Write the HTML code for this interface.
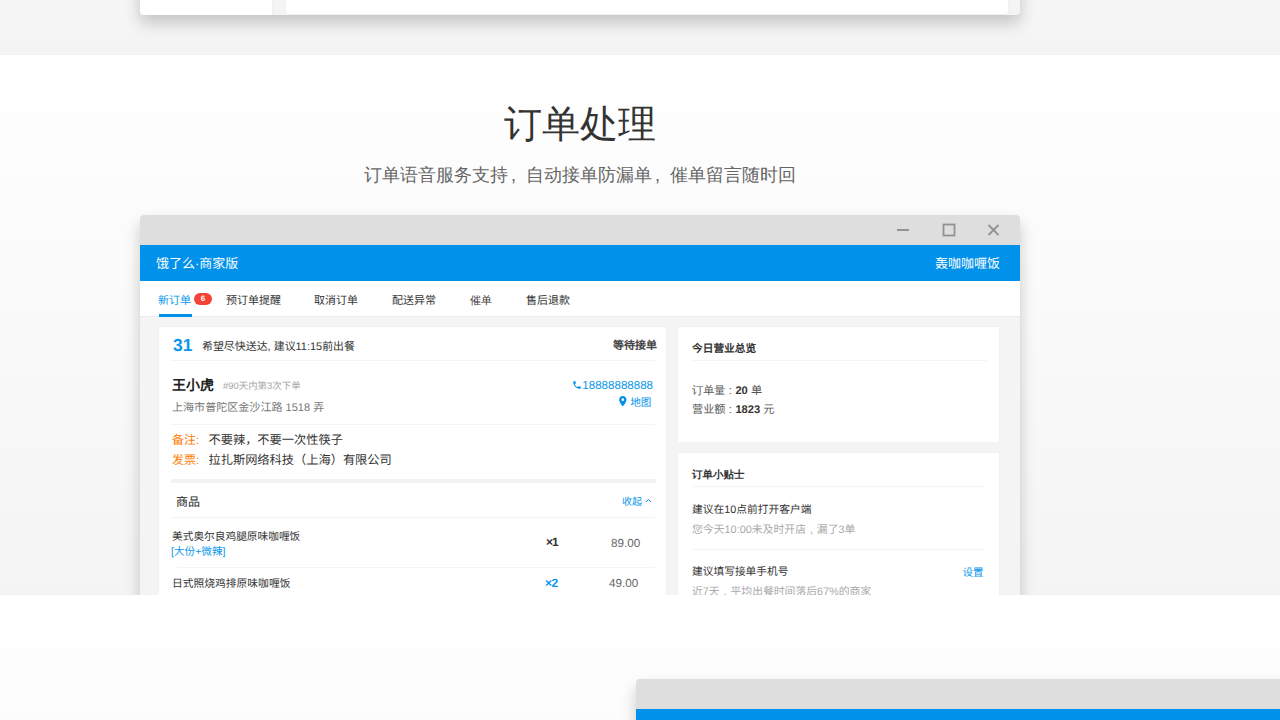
<!DOCTYPE html>
<html>
<head>
<meta charset="utf-8">
<title>订单处理</title>
<style>
*{box-sizing:border-box;margin:0;padding:0}
html,body{width:1280px;height:720px;overflow:hidden;background:#fdfdfd;font-family:"Liberation Sans",sans-serif;color:#333}
.sec{position:absolute;left:0;width:1280px;overflow:hidden;background:linear-gradient(#ffffff,#f4f4f4)}
#s1{top:-485px;height:540px}
#s2{top:55px;height:540px}
#s3{top:595px;height:540px}
.win{text-rendering:geometricPrecision;position:absolute;width:880px;height:600px;border-radius:4px 4px 0 0;box-shadow:0 8px 16px rgba(0,0,0,.2);background:#f4f4f4;overflow:hidden}
.tbar{position:absolute;left:0;top:0;width:880px;height:30px;background:#dedede}
.bbar{position:absolute;left:0;top:30px;width:880px;height:36px;background:#0091ea;color:#fff;font-size:13px;line-height:36px}
.tabs{position:absolute;left:0;top:66px;width:880px;height:36px;background:#fff;border-bottom:1px solid #ececec;font-size:11px;color:#333}
.tabs span{position:absolute;top:2px;line-height:37px;white-space:nowrap}
.card{position:absolute;background:#fff;border-radius:1px;box-shadow:0 0 2px rgba(0,0,0,.06)}
.t{position:absolute;white-space:nowrap;line-height:1}
.hl{position:absolute;height:1px;background:#f4f4f4}
h1{position:absolute;left:140px;width:880px;top:41px;text-align:center;font-size:38px;font-weight:400;color:#333;line-height:56px}
h2{position:absolute;left:140px;width:880px;top:107px;text-align:center;font-size:18px;font-weight:400;color:#666;line-height:26px}
.cl{display:inline-block;width:10px;text-align:center;font-style:normal}
b{font-weight:700;color:#333}
.cm{display:inline-block;width:18px;text-align:left;padding-left:3px;font-style:normal}
.blue{color:#0a96ec}
.org{color:#ff7a00}
</style>
</head>
<body>
<!-- section 1 (tail of previous feature) -->
<div class="sec" id="s1">
  <div class="win" style="left:140px;top:-100px;border-radius:0 0 4px 4px">
    <div class="card" style="left:0;top:0;width:132px;height:600px;border-radius:0"></div>
    <div class="card" style="left:146px;top:0;width:722px;height:599px;border-radius:0 0 3px 3px"></div>
  </div>
</div>

<!-- section 2 -->
<div class="sec" id="s2">
  <h1>订单处理</h1>
  <h2>订单语音服务支持<i class="cm">,</i>自动接单防漏单<i class="cm">,</i>催单留言随时回</h2>
  <div class="win" id="w2" lang="zh-CN" style="left:140px;top:160px">
    <div class="tbar">
      <svg style="position:absolute;left:750px;top:0" width="120" height="30" viewBox="0 0 120 30" fill="none" stroke="#929292" stroke-width="1.8">
        <path d="M7 15h12"/>
        <rect x="53.5" y="9.5" width="11" height="11"/>
        <path d="M98.5 10l10 10M108.5 10l-10 10"/>
      </svg>
    </div>
    <div class="bbar">
      <span class="t" style="left:16px;top:1px;line-height:36px">饿了么·商家版</span>
      <span class="t" style="right:20px;top:1px;line-height:36px">轰咖咖喱饭</span>
    </div>
    <div class="tabs">
      <span style="left:18px" class="blue">新订单</span>
      <i style="position:absolute;left:54px;top:12.400px;width:18px;height:12px;border-radius:6px;background:#f44336;color:#fff;font-size:8px;line-height:12px;text-align:center;font-style:normal;font-weight:700">6</i>
      <i style="position:absolute;left:19px;top:33px;width:33px;height:2.500px;background:#0091ea"></i>
      <span style="left:86px">预订单提醒</span>
      <span style="left:174px">取消订单</span>
      <span style="left:252px">配送异常</span>
      <span style="left:330px">催单</span>
      <span style="left:386px">售后退款</span>
    </div>

    <!-- left order card : window-relative coords (window origin = 140,215) -->
    <div class="card" style="left:19px;top:112px;width:507px;height:500px">
      <span class="t blue" style="left:14px;top:8px;font-size:17.500px;font-weight:700;line-height:20px">31</span>
      <span class="t" style="left:43px;top:11.5px;font-size:10.95px;line-height:16px;color:#333">希望尽快送达, 建议11:15前出餐</span>
      <span class="t" style="right:9px;top:11px;font-size:11px;font-weight:700;line-height:16px;color:#444">等待接单</span>
      <div class="hl" style="left:12px;top:33px;width:484px"></div>
      <span class="t" style="left:13px;top:48px;font-size:14px;font-weight:700;line-height:20px;color:#222">王小虎</span>
      <span class="t" style="left:64px;top:53.500px;font-size:9.450px;line-height:12px;color:#a4a4a4">#90天内第3次下单</span>
      <span class="t" style="left:13px;top:73px;font-size:11.06px;line-height:16px;color:#777">上海市普陀区金沙江路 1518 弄</span>
      <svg style="position:absolute;left:413px;top:53px" width="10" height="10" viewBox="0 0 24 24" fill="#0091ea"><path d="M6.6 10.8c1.4 2.8 3.8 5.100 6.600 6.600l2.200-2.200c.3-.3.700-.4 1-.2 1.100.4 2.300.6 3.600.6.600 0 1 .4 1 1V20c0 .600-.4 1-1 1C10.600 21 3 13.400 3 4c0-.6.400-1 1-1h3.500c.6 0 1 .4 1 1 0 1.300.2 2.500.6 3.600.1.300 0 .7-.2 1l-2.300 2.200z"/></svg>
      <span class="t blue" style="right:13px;top:50.500px;font-size:11.550px;line-height:16px">18888888888</span>
      <svg style="position:absolute;left:460.300px;top:69.200px" width="7.600" height="10.400" viewBox="0 0 14 20" fill="#0091ea"><path d="M7 0C3.100 0 0 3.100 0 7c0 5.200 7 13 7 13s7-7.800 7-13c0-3.900-3.100-7-7-7zm0 9.500A2.500 2.500 0 1 1 7 4.500a2.500 2.500 0 0 1 0 5z"/></svg>
      <span class="t blue" style="right:14.600px;top:68px;font-size:10.600px;line-height:16px">地图</span>
      <div class="hl" style="left:12px;top:97px;width:484px"></div>
      <span class="t org" style="left:13px;top:105px;font-size:12px;line-height:16px">备注:</span>
      <span class="t" style="left:49.500px;top:105px;font-size:12.23px;line-height:16px;color:#333">不要辣，不要一次性筷子</span>
      <span class="t org" style="left:13px;top:125px;font-size:12px;line-height:16px">发票:</span>
      <span class="t" style="left:49.500px;top:125px;font-size:12.23px;line-height:16px;color:#333">拉扎斯网络科技（上海）有限公司</span>
      <div style="position:absolute;left:12px;top:152px;width:485px;height:4px;background:repeating-linear-gradient(90deg,#eeeeee 0 1px,#f8f8f8 1px 2px)"></div>
      <span class="t" style="left:17px;top:166.5px;font-size:12px;font-weight:500;line-height:16px;color:#222">商品</span>
      <span class="t blue" style="left:463px;top:168px;font-size:10px;line-height:16px">收起</span>
      <svg style="position:absolute;left:486px;top:171px" width="7" height="5" viewBox="0 0 7 5" fill="none" stroke="#0091ea" stroke-width="1"><path d="M1 4l2.500-2.500L6 4"/></svg>
      <div class="hl" style="left:12px;top:190px;width:484px"></div>
      <span class="t" style="left:13px;top:202px;font-size:10.7px;line-height:16px;color:#333">美式奥尔良鸡腿原味咖喱饭</span>
      <span class="t blue" style="left:12px;top:217.5px;font-size:10.6px;line-height:14px">[大份+微辣]</span>
      <span class="t" style="left:387px;top:207px;font-size:12px;font-weight:700;line-height:16px;color:#333;letter-spacing:-1px">×1</span>
      <span class="t" style="left:452px;top:209px;font-size:11.700px;line-height:16px;color:#666">89.00</span>
      <div class="hl" style="left:18px;top:240px;width:478px"></div>
      <span class="t" style="left:13px;top:249.3px;font-size:10.78px;line-height:16px;color:#333">日式照烧鸡排原味咖喱饭</span>
      <span class="t blue" style="left:386px;top:248px;font-size:12px;font-weight:700;line-height:16px;letter-spacing:-.5px">×2</span>
      <span class="t" style="left:450px;top:248.500px;font-size:11.700px;line-height:16px;color:#666">49.00</span>
    </div>
    <!-- right card 1 -->
    <div class="card" style="left:538px;top:112px;width:321px;height:115px">
      <span class="t" style="left:14px;top:13.5px;font-size:10.7px;font-weight:700;line-height:16px;color:#333">今日营业总览</span>
      <div class="hl" style="left:14px;top:33px;width:295px"></div>
      <span class="t" style="left:14px;top:55.7px;font-size:11.150px;line-height:16px;color:#555">订单量<i class="cl">:</i><b>20</b> 单</span>
      <span class="t" style="left:14px;top:74.5px;font-size:11.150px;line-height:16px;color:#555">营业额<i class="cl">:</i><b>1823</b> 元</span>
    </div>
    <!-- right card 2 -->
    <div class="card" style="left:538px;top:238px;width:321px;height:300px">
      <span class="t" style="left:14px;top:13.7px;font-size:10.500px;font-weight:700;line-height:16px;color:#333">订单小贴士</span>
      <div class="hl" style="left:14px;top:33px;width:293px"></div>
      <span class="t" style="left:14px;top:48.8px;font-size:10.78px;line-height:16px;color:#333">建议在10点前打开客户端</span>
      <span class="t" style="left:14px;top:68.8px;font-size:10.87px;line-height:16px;color:#aaa">您今天10:00未及时开店<i class="cl" style="width:10.800px">,</i>漏了3单</span>
      <div class="hl" style="left:14px;top:96px;width:293px"></div>
      <span class="t" style="left:14px;top:111px;font-size:10.72px;line-height:16px;color:#333">建议填写接单手机号</span>
      <span class="t blue" style="left:284.500px;top:111.5px;font-size:10.5px;line-height:16px">设置</span>
      <span class="t" style="left:14px;top:131px;font-size:10.84px;line-height:16px;color:#aaa">近7天<i class="cl" style="width:10.800px">,</i>平均出餐时间落后67%的商家</span>
    </div>
  </div>
</div>

<!-- section 3 -->
<div class="sec" id="s3">
  <div class="win" style="left:636px;top:84px">
    <div class="tbar"></div>
    <div class="bbar"></div>
  </div>
</div>
</body>
</html>
